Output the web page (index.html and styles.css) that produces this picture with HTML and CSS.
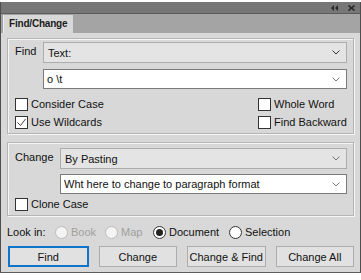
FILE: index.html
```html
<!DOCTYPE html>
<html lang="en">
<head>
    <meta charset="UTF-8">
    <title>Find/Change</title>
    <link rel="stylesheet" href="styles.css">
</head>
<body>
    <div class="window">
        <div class="titlebar">
            <svg class="tb-icon" width="8" height="6" viewBox="0 0 8 6"><path d="M3 0 L0 3 L3 6 Z M7 0 L4 3 L7 6 Z" fill="#262626"/></svg>
            <svg class="tb-icon close" width="7" height="6" viewBox="0 0 7 6"><path d="M0.5 0.5 L6.5 5.5 M6.5 0.5 L0.5 5.5" stroke="#262626" stroke-width="1.6"/></svg>
        </div>
        <div class="tabbar">
            <div class="tab">Find/Change</div>
        </div>
        <div class="content">
            <div class="group find-group">
                <div class="row">
                    <span class="label find-label">Find</span>
                    <div class="select">
                        <span>Text:</span>
                        <svg class="chevron" width="8" height="5" viewBox="0 0 8 5"><path d="M0.5 0.5 L4 4 L7.5 0.5" fill="none" stroke="#333" stroke-width="1"/></svg>
                    </div>
                </div>
                <div class="combo find-combo">
                    <span>o \t</span>
                    <svg class="chevron" width="8" height="5" viewBox="0 0 8 5"><path d="M0.5 0.5 L4 4 L7.5 0.5" fill="none" stroke="#777" stroke-width="1"/></svg>
                </div>
                <div class="options">
                    <div class="opt-col">
                        <label class="check"><span class="box"></span>Consider Case</label>
                        <label class="check"><span class="box"><svg width="11" height="11" viewBox="0 0 11 11"><path d="M1.5 5.5 L4.5 8.5 L9.5 2" fill="none" stroke="#444" stroke-width="1"/></svg></span>Use Wildcards</label>
                    </div>
                    <div class="opt-col right-col">
                        <label class="check"><span class="box"></span>Whole Word</label>
                        <label class="check"><span class="box"></span>Find Backward</label>
                    </div>
                </div>
            </div>

            <div class="group change-group">
                <div class="row">
                    <span class="label change-label">Change</span>
                    <div class="select">
                        <span>By Pasting</span>
                        <svg class="chevron" width="8" height="5" viewBox="0 0 8 5"><path d="M0.5 0.5 L4 4 L7.5 0.5" fill="none" stroke="#777" stroke-width="1"/></svg>
                    </div>
                </div>
                <div class="combo change-combo">
                    <span>Wht here to change to paragraph format</span>
                    <svg class="chevron" width="8" height="5" viewBox="0 0 8 5"><path d="M0.5 0.5 L4 4 L7.5 0.5" fill="none" stroke="#777" stroke-width="1"/></svg>
                </div>
                <label class="check clone"><span class="box"></span>Clone Case</label>
            </div>

            <div class="lookin">
                <span class="lookin-label">Look in:</span>
                <label class="radio disabled r-book"><span class="circle"></span>Book</label>
                <label class="radio disabled r-map"><span class="circle"></span>Map</label>
                <label class="radio checked r-doc"><span class="circle"></span>Document</label>
                <label class="radio"><span class="circle"></span>Selection</label>
            </div>

            <div class="buttons">
                <button class="btn default">Find</button>
                <button class="btn">Change</button>
                <button class="btn">Change &amp; Find</button>
                <button class="btn">Change All</button>
            </div>
        </div>
    </div>
</body>
</html>
```

FILE: styles.css
```css
* {
    box-sizing: border-box;
}
body {
    margin: 0;
    background: #fff;
    font-family: "Liberation Sans", Arial, sans-serif;
    font-size: 11px;
    color: #111;
}
.window {
    margin-top: 2px;
    width: 361px;
    height: 271px;
    background: #d8d8d8;
    border-left: 1px solid #4e4e4e;
    border-right: 1px solid #4e4e4e;
    border-bottom: 1px solid #5c5c5c;
    display: flex;
    flex-direction: column;
}
.titlebar {
    height: 12px;
    background: #777;
    border-bottom: 1px solid #5a5a5a;
    display: flex;
    justify-content: flex-end;
    align-items: center;
    gap: 9px;
    padding-right: 5px;
}
.tabbar {
    height: 20px;
    background: #a4a4a4;
    border-bottom: 1px solid #8e8e8e;
    padding-left: 2px;
    padding-top: 1px;
    display: flex;
}
.tab {
    width: 70px;
    height: 19px;
    background: #d8d8d8;
    border-left: 1px solid #ececec;
    font-weight: bold;
    font-size: 10px;
    letter-spacing: -0.2px;
    padding-left: 5px;
    line-height: 18px;
    color: #1c1c1c;
}
.content {
    padding: 5px 6px 0 6px;
    margin-top: -1px;
    background: #d8d8d8;
    flex: 1;
}
.group {
    border: 1px solid #b4b4b4;
    box-shadow: 1px 1px 0 #f6f6f6, inset 1px 1px 0 #f6f6f6;
    padding: 3px 6px 0 7px;
}
.find-group {
    height: 96px;
}
.change-group {
    margin-top: 8px;
    height: 74px;
    padding-top: 5px;
}
.row {
    display: flex;
    align-items: center;
}
.label {
    align-self: flex-start;
    padding-top: 3px;
}
.find-label {
    width: 28px;
}
.change-label {
    width: 45px;
}
.select,
.combo {
    flex: 1;
    height: 21px;
    display: flex;
    align-items: center;
    justify-content: space-between;
    padding: 0 6px 0 4px;
    border: 1px solid #adadad;
    background: #e4e4e4;
}
.combo {
    height: 20px;
    margin-top: 6px;
    background: #fff;
    border-color: #7a7a7a;
    padding-left: 3px;
}
.find-combo {
    margin-left: 28px;
}
.change-combo {
    margin-left: 45px;
    margin-top: 5px;
}
.chevron {
    flex: none;
}
.options {
    display: flex;
    margin-top: 6px;
}
.opt-col {
    flex: 1;
    display: flex;
    flex-direction: column;
}
.right-col {
    flex: none;
    width: 89px;
}
.check {
    display: flex;
    align-items: center;
    height: 18px;
    gap: 3px;
}
.box {
    width: 13px;
    height: 13px;
    border: 1px solid #333;
    background: #fff;
    display: flex;
    align-items: center;
    justify-content: center;
}
.clone {
    margin-top: 1px;
}
.lookin {
    display: flex;
    align-items: center;
    height: 16px;
    margin-top: 8px;
}
.lookin-label {
    width: 48px;
}
.radio {
    display: flex;
    align-items: center;
    gap: 3px;
}
.r-book {
    width: 50px;
}
.r-map {
    width: 48px;
}
.r-doc {
    width: 76px;
}
.circle {
    width: 13px;
    height: 13px;
    border-radius: 50%;
    border: 1px solid #333;
    background: #fff;
    display: flex;
    align-items: center;
    justify-content: center;
}
.radio.disabled {
    color: #a0a0a0;
}
.radio.disabled .circle {
    border-color: #bcbcbc;
    background: #f4f4f4;
}
.radio.checked .circle::after {
    content: "";
    width: 7px;
    height: 7px;
    border-radius: 50%;
    background: #222;
}
.buttons {
    display: flex;
    gap: 10px;
    margin-top: 6px;
    padding-left: 1px;
    width: 347px;
}
.btn {
    flex: 1;
    height: 21px;
    background: #e1e1e1;
    border: 1px solid #adadad;
    font-family: inherit;
    font-size: 11px;
    color: #111;
    padding: 0;
}
.btn.default {
    border: 2px solid #1274c8;
}
```
